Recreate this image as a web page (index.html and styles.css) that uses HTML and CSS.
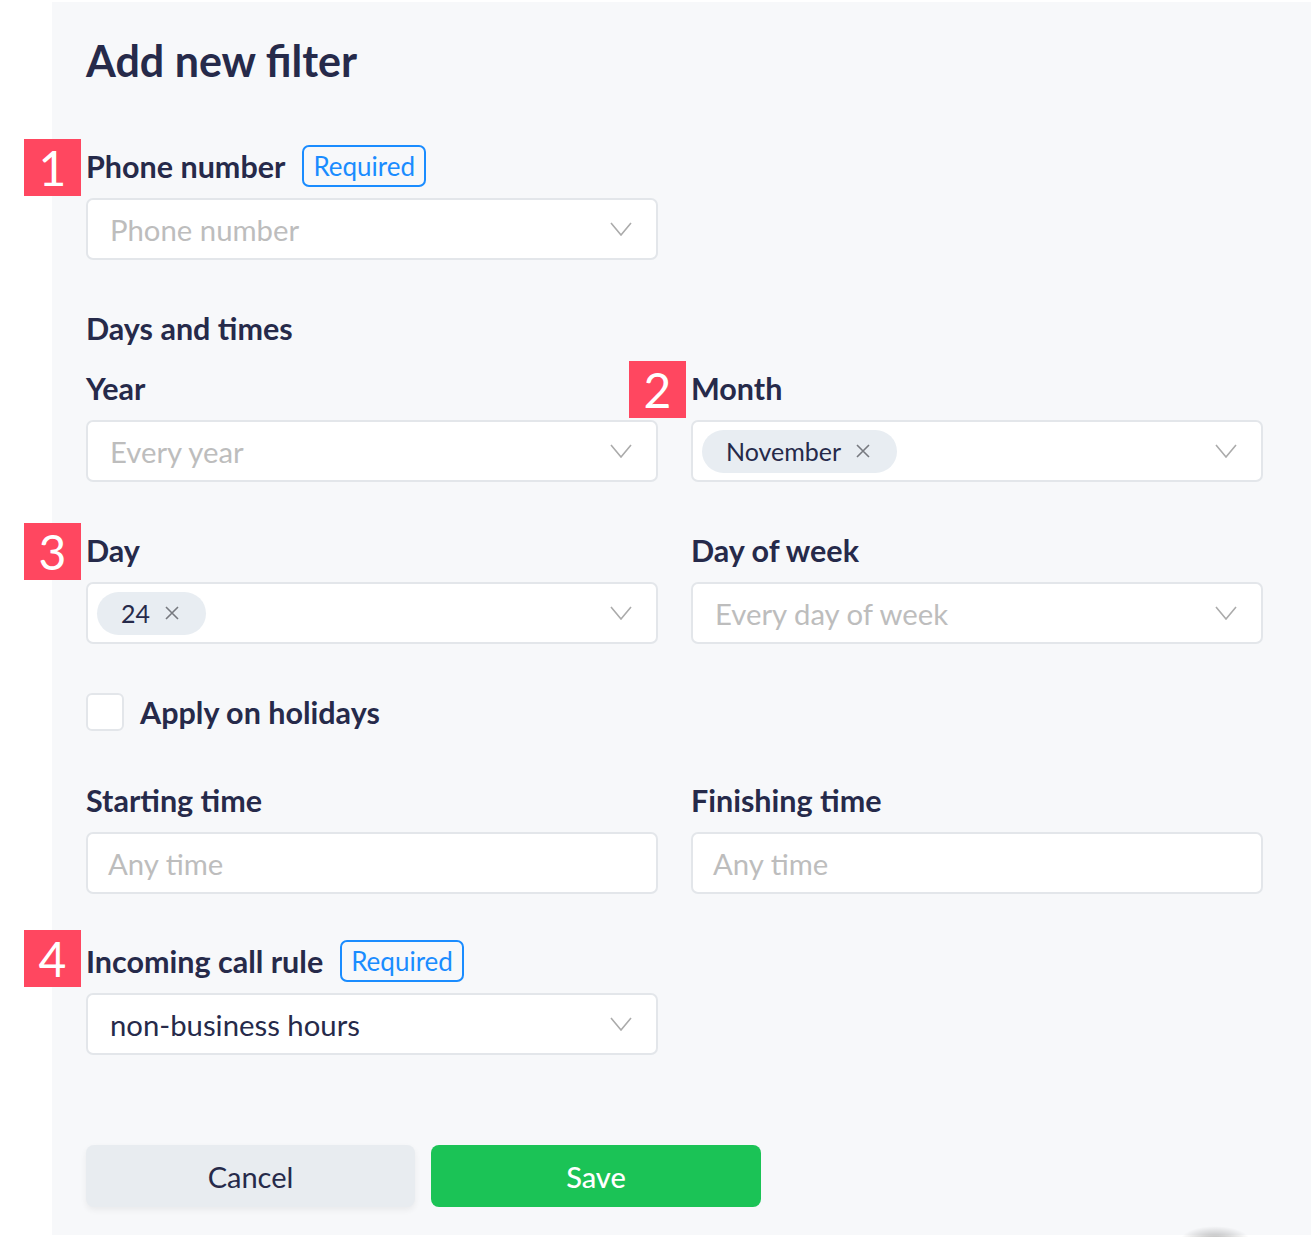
FILE: index.html
```html
<!DOCTYPE html>
<html lang="en">
<head>
    <meta charset="UTF-8">
    <meta name="viewport" content="width=device-width, initial-scale=1.0">
    <title>Add new filter</title>
    <link rel="stylesheet" href="styles.css">
</head>
<body>
    <div class="panel">
        <h1 class="title">Add new filter</h1>

        <div class="field">
            <div class="field-head">
                <span class="marker">1</span>
                <span class="label">Phone number</span>
                <span class="required">Required</span>
            </div>
            <div class="select">
                <span class="placeholder">Phone number</span>
                <svg class="chevron" viewBox="0 0 22 14"><polyline points="1,1 11,13 21,1"/></svg>
            </div>
        </div>

        <h2 class="section">Days and times</h2>

        <div class="grid">
            <div class="field">
                <div class="field-head"><span class="label">Year</span></div>
                <div class="select">
                    <span class="placeholder">Every year</span>
                    <svg class="chevron" viewBox="0 0 22 14"><polyline points="1,1 11,13 21,1"/></svg>
                </div>
            </div>
            <div class="field">
                <div class="field-head">
                    <span class="marker">2</span>
                    <span class="label">Month</span>
                </div>
                <div class="select">
                    <span class="chip">November
                        <svg class="chip-x" viewBox="0 0 14 14"><path d="M1 1L13 13M13 1L1 13"/></svg>
                    </span>
                    <svg class="chevron" viewBox="0 0 22 14"><polyline points="1,1 11,13 21,1"/></svg>
                </div>
            </div>
            <div class="field">
                <div class="field-head">
                    <span class="marker">3</span>
                    <span class="label">Day</span>
                </div>
                <div class="select">
                    <span class="chip">24
                        <svg class="chip-x" viewBox="0 0 14 14"><path d="M1 1L13 13M13 1L1 13"/></svg>
                    </span>
                    <svg class="chevron" viewBox="0 0 22 14"><polyline points="1,1 11,13 21,1"/></svg>
                </div>
            </div>
            <div class="field">
                <div class="field-head"><span class="label">Day of week</span></div>
                <div class="select">
                    <span class="placeholder">Every day of week</span>
                    <svg class="chevron" viewBox="0 0 22 14"><polyline points="1,1 11,13 21,1"/></svg>
                </div>
            </div>
        </div>

        <label class="check">
            <span class="check-box"></span>
            <span class="check-text">Apply on holidays</span>
        </label>

        <div class="grid times">
            <div class="field">
                <div class="field-head"><span class="label">Starting time</span></div>
                <div class="input"><span class="placeholder">Any time</span></div>
            </div>
            <div class="field">
                <div class="field-head"><span class="label">Finishing time</span></div>
                <div class="input"><span class="placeholder">Any time</span></div>
            </div>
        </div>

        <div class="field rule">
            <div class="field-head">
                <span class="marker marker-up">4</span>
                <span class="label">Incoming call rule</span>
                <span class="required">Required</span>
            </div>
            <div class="select">
                <span class="value">non-business hours</span>
                <svg class="chevron" viewBox="0 0 22 14"><polyline points="1,1 11,13 21,1"/></svg>
            </div>
        </div>

        <div class="actions">
            <button class="btn btn-cancel">Cancel</button>
            <button class="btn btn-save">Save</button>
        </div>
    </div>

    <div class="fab-shadow"></div>
</body>
</html>
```

FILE: styles.css
```css
* {
    margin: 0;
    padding: 0;
    box-sizing: border-box;
}

body {
    font-family: Lato, "Liberation Sans", sans-serif;
    background-color: #ffffff;
    color: #262a4a;
    overflow: hidden;
    position: relative;
    height: 1237px;
}

.panel {
    margin: 2px 0 0 52px;
    width: 1259px;
    height: 1233px;
    padding: 33px 0 0 34px;
    background-color: #f7f8fa;
}

.title {
    font-size: 43px;
    line-height: 52px;
    font-weight: 700;
    margin-bottom: 58px;
}

.field {
    width: 572px;
}

.field-head {
    position: relative;
    display: flex;
    align-items: center;
    gap: 17px;
    height: 42px;
    margin-bottom: 11px;
}

.label {
    font-size: 30.5px;
    line-height: 40px;
    font-weight: 700;
}

.marker {
    position: absolute;
    left: -62px;
    top: -6px;
    width: 57px;
    height: 57px;
    background-color: #ff4760;
    color: #ffffff;
    font-size: 48px;
    line-height: 57px;
    text-align: center;
}

.marker-up {
    top: -10px;
}

.required {
    height: 42px;
    padding: 0 9px;
    border: 2px solid #1a8cff;
    border-radius: 7px;
    color: #1a8cff;
    font-size: 26px;
    line-height: 38px;
}

.select,
.input {
    display: flex;
    align-items: center;
    height: 62px;
    padding: 0 24px 0 22px;
    background-color: #ffffff;
    border: 2px solid #e3e6ea;
    border-radius: 7px;
}

.placeholder {
    font-size: 29.3px;
    color: #bdbdbd;
}

.value {
    font-size: 29.3px;
    color: #262a4a;
}

.chevron {
    margin-left: auto;
    width: 22px;
    height: 14px;
    fill: none;
    stroke: #ababab;
    stroke-width: 1.6;
}

.chip {
    display: flex;
    align-items: center;
    gap: 15px;
    height: 43px;
    margin-left: -13px;
    padding: 0 27px 0 24px;
    background-color: #e8edf2;
    border-radius: 22px;
    font-size: 25px;
    color: #262a4a;
}

.chip-x {
    width: 14px;
    height: 14px;
    fill: none;
    stroke: #777a80;
    stroke-width: 1.6;
}

.section {
    margin-top: 47px;
    margin-bottom: 18px;
    font-size: 30.5px;
    line-height: 42px;
    font-weight: 700;
}

.grid {
    display: grid;
    grid-template-columns: 572px 572px;
    column-gap: 33px;
    row-gap: 47px;
}

.check {
    display: flex;
    align-items: center;
    gap: 16px;
    height: 38px;
    margin-top: 49px;
}

.check-box {
    width: 38px;
    height: 38px;
    background-color: #ffffff;
    border: 2px solid #e3e6ea;
    border-radius: 6px;
}

.check-text {
    font-size: 30.5px;
    font-weight: 700;
}

.times {
    margin-top: 48px;
}

.input {
    padding-left: 20px;
}

.rule {
    margin-top: 46px;
}

.actions {
    display: flex;
    gap: 16px;
    margin-top: 90px;
}

.btn {
    width: 330px;
    height: 62px;
    border: none;
    border-radius: 8px;
    font-family: Lato, "Liberation Sans", sans-serif;
    font-size: 29px;
}

.btn-cancel {
    width: 329px;
    background-color: #e8ecf0;
    color: #262a4a;
    box-shadow: 0 3px 6px rgba(0, 0, 0, 0.06);
}

.btn-save {
    background-color: #1bc356;
    color: #ffffff;
    font-weight: 500;
}

/* soft shadow of the floating button just below the fold */
.fab-shadow {
    position: absolute;
    left: 1180px;
    top: 1226px;
    width: 70px;
    height: 14px;
    background: radial-gradient(ellipse at center bottom, rgba(0, 0, 0, 0.28), rgba(0, 0, 0, 0) 70%);
}
```
